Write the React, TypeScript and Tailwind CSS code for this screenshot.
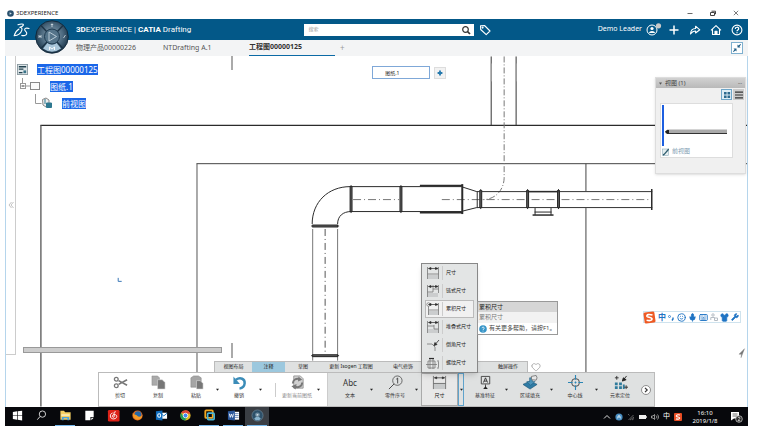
import type { ReactNode } from 'react'
import clsx from 'clsx'
import { Wrench, Keyboard, Mic, Smile, Shirt, Heart } from 'lucide-react'

const DARK = '#2b2b2b'

function Compass() {
  return (
    <svg viewBox="0 0 34 34" className="absolute left-[30px] top-[13px] z-10 size-[34px]">
      <defs>
        <radialGradient id="ring" cx="50%" cy="45%" r="60%">
          <stop offset="0%" stopColor="#8fa3b1" />
          <stop offset="55%" stopColor="#4d6a80" />
          <stop offset="100%" stopColor="#10283b" />
        </radialGradient>
      </defs>
      <circle cx="17" cy="17" r="16.3" fill="url(#ring)" stroke="#0b2233" strokeWidth=".8" />
      <path d="M6 5.500 12 12M28 5.500 22 12M6 28.500 12 22M28 28.500 22 22" stroke="#1c3447" strokeWidth="1.400" />
      <path d="M12.500 23 Q17 26 21.500 23 L26 28.500 Q17 35 8 28.500Z" fill="#a9c6da" />
      <circle cx="17" cy="16.500" r="7.500" fill="#55748a" stroke="#1d3a50" strokeWidth="1" />
      <path d="M14 12 21.500 16.500 14 21Z" fill="none" stroke="#c3d4df" strokeWidth=".9" />
      <path d="M17 3.500v3.500M15.800 4.500h2.400M4 15v3M6 15v3M4 16.500h2M28.500 18l2-3" stroke="#d5dfe6" strokeWidth=".8" fill="none" />
      <path d="M14.500 30v-3l2.500 2 2.500-2v3" stroke="#fff" strokeWidth=".9" fill="none" />
    </svg>
  )
}

function DsLogo() {
  return (
    <svg viewBox="0 0 18 14" className="h-[14px] w-[18px]" fill="none" stroke="#fff" strokeWidth="1.100" strokeLinecap="round" strokeLinejoin="round">
      <path d="M5 1.800C7.500 .8 11 .6 10.300 2.200 9.800 3.300 8 4 6.800 4.300 8.600 4.300 9.400 5.500 8.800 7.300 7.800 10.300 5 12.400 1.200 12.700 2 10 3.800 7.300 6 6" />
      <path d="M16 5.500C13.500 4.700 11.500 5.300 11.700 6.800 12 8.300 14.300 8.800 13.700 10.800 13.200 12.600 10.500 13 8.800 12.400" />
    </svg>
  )
}

function TitleBar() {
  return (
    <div className="flex h-[12px] items-center justify-between pl-[2px] pr-[9px]">
      <div className="flex items-center gap-[2px] text-[6px] text-[#222]">
        <svg viewBox="0 0 8 8" className="size-[7px]">
          <circle cx="4" cy="4" r="3.800" fill="#2b516e" />
          <path d="M3 2.500 5.500 4 3 5.500Z" fill="#cfe0ea" />
        </svg>
        <span>3DEXPERIENCE</span>
      </div>
      <div className="flex items-center gap-[17px] text-[#444]">
        <button aria-label="最小化"><svg viewBox="0 0 6 6" className="size-[6px]"><path d="M.5 3.500h5" stroke="currentColor" strokeWidth=".8" /></svg></button>
        <button aria-label="还原"><svg viewBox="0 0 6 6" className="size-[6px]" fill="none" stroke="currentColor"><path d="M.5 2.500h4v3h-4zM1.500 1.200h4v3" /></svg></button>
        <button aria-label="关闭"><svg viewBox="0 0 6 6" className="size-[6px]"><path d="M.8.8l4.400 4.400M5.200.8.8 5.200" stroke="currentColor" strokeWidth=".7" /></svg></button>
      </div>
    </div>
  )
}

function HeaderButton({ label, children }: { label: string; children: ReactNode }) {
  return (
    <button aria-label={label} className="flex size-[12px] items-center justify-center text-white">
      <svg viewBox="0 0 12 12" className="size-[12px]" fill="none" stroke="currentColor" strokeWidth="1.1" strokeLinejoin="round">
        {children}
      </svg>
    </button>
  )
}

function Header() {
  return (
    <header className="flex h-[21px] items-center bg-[#035888] pl-[8px] pr-[5px] text-white">
      <DsLogo />
      <h1 className="ml-[45px] w-[31.3%] whitespace-nowrap font-['Roboto'] text-[8px]">
        <b>3D</b>EXPERIENCE | <b>CATIA</b> Drafting
      </h1>
      <div className="flex h-[12px] w-[170px] items-center bg-white pl-[4px] pr-[3px]">
        <input aria-label="搜索" placeholder="搜索" className="min-w-0 flex-1 text-[5px] text-[#333] outline-none placeholder:text-[#999]" />
        <button aria-label="搜索">
          <svg viewBox="0 0 10 10" className="size-[10px]" fill="none" stroke="#333">
            <circle cx="4.500" cy="4.500" r="2.800" strokeWidth="1.200" />
            <path d="M6.600 6.600 9 9" strokeWidth="1.700" />
          </svg>
        </button>
      </div>
      <div className="ml-[5px]">
        <HeaderButton label="标记">
          <path d="M1.500 1.800 5.500 1.500 11 7 7.200 10.600 1.700 5.500Z" />
          <circle cx="3.600" cy="3.600" r=".5" />
        </HeaderButton>
      </div>
      <span className="ml-auto mr-[4px] text-[7px]">Demo Leader</span>
      <div className="flex items-center gap-[9px]">
        <button aria-label="用户" className="flex size-[13px] text-white">
          <svg viewBox="0 0 16 13" className="h-[13px] w-[16px] shrink-0">
            <circle cx="6" cy="7" r="5" fill="none" stroke="#fff" />
            <circle cx="6" cy="5.500" r="1.600" fill="#fff" />
            <path d="M3 10C3 7.200 9 7.200 9 10Z" fill="#fff" />
            <circle cx="12.500" cy="2.800" r="2.600" fill="#c9c9c9" />
          </svg>
        </button>
        <HeaderButton label="添加"><path d="M6 1.500v9M1.500 6h9" strokeWidth="1.500" /></HeaderButton>
        <HeaderButton label="共享"><path d="M1.500 10C1.700 6.500 3.500 4.600 6.600 4.500V2.200L10.800 5.800 6.600 9V7C4.500 7 3 7.800 1.500 10Z" /></HeaderButton>
        <HeaderButton label="主页"><path d="M1 6.300 6 1.600 11 6.300M2.500 5.500v5h7v-5" /><path d="M5 10.500V7.200h2v3.300Z" fill="currentColor" /></HeaderButton>
        <HeaderButton label="帮助"><circle cx="6" cy="6" r="4.900" /><path d="M4.300 4.900C4.300 2.700 7.700 2.700 7.700 4.700 7.700 6 6 5.900 6 7.200M6 8.200v1.100" strokeWidth="1.200" /></HeaderButton>
      </div>
    </header>
  )
}

function DocTabs() {
  return (
    <nav className="flex h-[16px] items-center bg-[#f3f4f5] pl-[71px] pr-[5px] text-[7px] text-[#555]">
      <button className="w-[87px] text-left">物理产品00000226</button>
      <button className="w-[86px] text-left">NTDrafting A.1</button>
      <button className="h-full w-[86px] border-b border-[#0b6aa5] text-left font-bold text-[#333]">工程图00000125</button>
      <button aria-label="新建" className="ml-[5px] text-[8px] text-[#999]">+</button>
      <button aria-label="退出全屏" className="ml-auto flex size-[12px] items-center justify-center border border-[#7fb0cf] bg-white">
        <svg viewBox="0 0 10 10" className="size-[10px]" fill="#1f5f87">
          <path d="M5.500 1.500 6.500 2.500 8.500 1 9 1.500 7.500 3.500 8.500 4.500H5.500ZM4.500 8.500 3.500 7.500 1.500 9 1 8.500 2.500 6.500 1.500 5.500H4.500Z" />
        </svg>
      </button>
    </nav>
  )
}

function Flange({ x, y, length, vertical = true }: { x: number; y: number; length: number; vertical?: boolean }) {
  return vertical ? (
    <g stroke={DARK}>
      <path d={`M${x} ${y}v${length}`} strokeWidth="1" />
      <path d={`M${x} ${y + 1}v${length - 2}`} strokeWidth="3" />
      <path d={`M${x} ${y + 2}v${length - 4}`} stroke="#777" strokeWidth=".6" />
    </g>
  ) : (
    <g stroke={DARK}>
      <path d={`M${x} ${y}h${length}`} strokeWidth="1" />
      <path d={`M${x + 1} ${y}h${length - 2}`} strokeWidth="3" />
      <path d={`M${x + 2} ${y}h${length - 4}`} stroke="#777" strokeWidth=".6" />
    </g>
  )
}

function Drawing() {
  return (
    <svg viewBox="5 56 743 351" className="absolute inset-0 size-full" fill="none" stroke={DARK} strokeWidth="1">
      <path d="M39.500 125H748" strokeWidth="1.300" />
      <path d="M40 125V407" stroke="#555" strokeWidth="1.300" />
      <path d="M196 163.500H748" stroke="#444" />
      <path d="M196.500 163.500V373" stroke="#555" />
      <path d="M586.500 163.500V191M586.500 208V373" stroke="#444" />
      <path d="M491.500 56V125M516.500 56V125" stroke="#333" />
      <path d="M491.500 63V81M516.500 63V81" stroke="#aaa" />
      <path d="M504.500 56V178C504 190 496 199 484 199.500" stroke="#777" strokeDasharray="6 2 1 2" />

      <path d="M312 224C312 202 328 186.500 350 186.500H462" />
      <path d="M337.500 224C337.500 216 343 211.500 351 211.500H462" />
      <path d="M312.500 229V361M337.500 229V361" stroke="#777" />
      <path d="M325 229V355" stroke="#555" strokeDasharray="7 3 1 3" />
      <path d="M353 199.500H399M442 199.500H652" stroke="#777" strokeDasharray="8 3 1 3" />
      <Flange x={311} y={226} length={28} vertical={false} />
      <Flange x={311} y={356} length={28} vertical={false} />
      <Flange x={351} y={185} length={28} />
      <Flange x={401} y={185} length={28} />
      <path d="M420 185.500H463M420 212.500H463" strokeWidth="2" />
      <path d="M462.500 184V214" strokeWidth="2" />
      <path d="M463 187 477 191.500M463 211 477 207.500M477.500 191V208" />
      <path d="M477 191.500H653M477 207.500H653" stroke="#333" />
      <Flange x={481} y={189} length={20} />
      <Flange x={528} y={189} length={20} />
      <Flange x={559} y={189} length={20} />
      <path d="M528 191.500H559" strokeWidth="1.500" />
      <path d="M652.500 189V210" strokeWidth="1.500" />
      <path d="M535.500 208V215M551.500 208V215M535 212H552" />
      <path d="M533 215H554" strokeWidth="1.500" />

      <path d="M117.500 278V281.500H121" stroke="#3b78b8" />
      <path d="M745.500 349 740 354.500 742.500 354.500 742 358Z" fill="#777" stroke="#777" strokeWidth=".4" />
    </svg>
  )
}

function Tree() {
  return (
    <ul className="relative pl-px pt-[5px] text-[8px] text-white">
      <li className="flex h-[17px] items-center gap-[9px]">
        <svg viewBox="0 0 12 12" className="size-[11px]">
          <rect x=".5" y=".5" width="11" height="11" fill="#dde5e8" stroke="#8b9aa1" />
          <path d="M2 3h8M2 5.500h5M2 9.500h4" stroke="#23424f" strokeWidth="1.400" />
          <path d="M7 7h3v3H7z" fill="#3b7489" />
        </svg>
        <span className="bg-[#1a66e8] leading-[11px]">工程图00000125</span>
      </li>
      <li className="flex h-[16px] items-center pl-[3px]">
        <svg viewBox="0 0 22 16" className="h-[16px] w-[22px]" fill="none" stroke="#999">
          <path d="M2.500 0v5M5 8h5" />
          <rect x=".5" y="5.500" width="5" height="5" fill="#fff" />
          <path d="M1.500 8h3" stroke="#333" />
          <rect x="10.500" y="4.500" width="9" height="7" fill="#fafafa" stroke="#888" />
        </svg>
        <span className="ml-[8px] bg-[#1a66e8] leading-[11px]">图纸.1</span>
      </li>
      <li className="flex h-[18px] items-center pl-[17px]">
        <svg viewBox="0 0 20 18" className="h-[18px] w-[20px]" fill="none" stroke="#999">
          <path d="M1.500 0v9.500h6" />
          <path d="M8.500 5.500 12 4l3 2v4l-3 3-3-2z" fill="#eee" stroke="#888" />
          <path d="M11 5v5M12.500 9h5v4.500h-5z" fill="#2e7890" stroke="#2e7890" />
        </svg>
        <span className="ml-[8px] bg-[#1a66e8] leading-[11px]">前视图</span>
      </li>
    </ul>
  )
}

function ViewsPanel() {
  return (
    <aside className="relative mr-px mt-[21px] h-[97px] w-[91px] border border-[#ddd] bg-[#f0f0f0] text-[6px] text-[#444] shadow-sm">
      <div className="flex h-[10px] items-center bg-gradient-to-b from-[#d2d2d2] to-[#b9b9b9] px-[3px]">
        <svg viewBox="0 0 4 4" className="mr-[3px] size-[3px]"><path d="M0 .5h4L2 3.500Z" fill="#555" /></svg>
        <span>视图 (1)</span>
        <span className="ml-auto text-[5px]">...</span>
      </div>
      <div className="flex justify-end gap-px pr-px pt-px">
        <button aria-label="图标视图" className="flex size-[11px] items-center justify-center border border-[#6fa6c8] bg-[#deedf5]">
          <svg viewBox="0 0 8 8" className="size-[8px]" fill="#2c6a8e"><path d="M1 1h2.600v2.600H1zM4.500 1h2.600v2.600H4.500zM1 4.500h2.600v2.600H1zM4.500 4.500h2.600v2.600H4.500z" /></svg>
        </button>
        <button aria-label="列表视图" className="flex size-[11px] items-center justify-center bg-[#ccc]">
          <svg viewBox="0 0 8 8" className="size-[8px]" stroke="#333" strokeWidth="1.200"><path d="M0 1.200h8M0 4h8M0 6.800h8" /></svg>
        </button>
      </div>
      <div className="ml-[4px] mt-[3px] w-[73px] border border-[#ddd] bg-white pl-px pt-px">
        <div className="flex h-[41px] items-center border-l-2 border-[#1d5fe0]">
          <svg viewBox="0 0 66 6" className="mt-[12px] h-[6px] w-[66px]">
            <path d="M3 .5H63V4.500H3Z" fill="#aaa" />
            <path d="M3 4.500H63" stroke="#333" strokeWidth="1" />
            <path d="M1 2.500 3 1h2v3.500H2Z" fill="#222" />
          </svg>
        </div>
        <div className="flex h-[11px] items-center gap-[3px] text-[#7f9db3]">
          <svg viewBox="0 0 7 8" className="h-[8px] w-[7px]">
            <rect x=".5" y="1" width="6" height="6.500" fill="#e6eef0" stroke="#8eb0bd" strokeWidth=".6" />
            <path d="M1 7C3 6.500 4 4 6.800 1" fill="none" stroke="#2f5d6e" strokeWidth="1.300" />
          </svg>
          <span>前视图</span>
        </div>
      </div>
    </aside>
  )
}

function ImeBar() {
  return (
    <div className="absolute right-[6px] top-[255px] flex h-[12px] items-center gap-[2px] border border-[#cfe3ee] bg-white pr-px text-[#1f74c4]">
      <svg viewBox="0 0 13 13" className="-ml-px size-[13px]">
        <rect x="1" y="1" width="11" height="11" rx="1.500" fill="#ee5a24" transform="rotate(-8 6.500 6.500)" />
        <path d="M9.500 4C6 3 3.500 3.500 4 5.300 4.500 6.500 9 6 9 8 9 9.800 6 9.800 3.600 9.200" fill="none" stroke="#fff" strokeWidth="1.700" />
      </svg>
      <b className="text-[8px] leading-none">中</b>
      <svg viewBox="0 0 7 7" className="size-[7px]"><circle cx="1.500" cy="2.500" r="1" fill="none" stroke="currentColor" strokeWidth=".8" /><path d="M5 3.500v1.500L4 6.500" stroke="currentColor" strokeWidth="1.400" fill="none" /></svg>
      <Smile className="size-[9px]" strokeWidth={2.5} />
      <Mic className="size-[9px]" fill="currentColor" />
      <Keyboard className="size-[9px]" strokeWidth={2.5} />
      <svg viewBox="0 0 8 8" className="size-[8px]" fill="none" stroke="#b5bcc4"><circle cx="3" cy="2" r="1.200" /><path d="M.8 7V4.500h4M4.500 5h3v2.500h-3z" /></svg>
      <Shirt className="size-[9px]" fill="currentColor" />
      <Wrench className="size-[8px]" fill="currentColor" />
    </div>
  )
}

const menuItems: { name: string; icon: ReactNode }[] = [
  { name: '尺寸', icon: <path d="M1.500 1v12M12.500 1v12M1.500 8h11" /> },
  { name: '链式尺寸', icon: <path d="M1.500 1v12M7 1v7M12.500 1v8M1.500 8H7M7 5h5.500" /> },
  { name: '累积尺寸', icon: <><path d="M2.500 4v9M12.500 1v12M2.500 8h10" /><circle cx="2.500" cy="2.500" r="1.700" fill="#fff" /></> },
  { name: '堆叠式尺寸', icon: <path d="M1.500 1v12M12.500 1v12M8 5v4h4.500M1.500 6H8" /> },
  { name: '倒角尺寸', icon: <><path d="M1 6h5l3 3v4" /><path d="M8 7.500 9 4.500 11 6.500ZM10 5.500l3-3.500" fill={DARK} stroke={DARK} /></> },
  { name: '螺纹尺寸', icon: <><path d="M2 5h7v7H2zM4 2v11M7 2v11M0 8.500h11M12.500 5.500v6M11 5h2M11 12h2" /><path d="M3 2.500h5" stroke={DARK} strokeWidth="1.200" /></> },
]

function DimensionMenu() {
  return (
    <div className="absolute bottom-full left-0 z-20 w-[57px] border border-[#888] bg-[#e3e5e5] shadow-md">
      <ul className="flex h-[108px] flex-col px-[3px]">
        {menuItems.map((item, i) => (
          <li key={item.name} className="relative flex flex-1">
            <button className={clsx('flex flex-1 items-center whitespace-nowrap border text-[5px] text-[#222]', i === 2 ? 'border-[#bbb] bg-[#f1f1f1]' : 'border-transparent')}>
              <svg viewBox="0 0 14 14" className="mr-[2px] size-[14px] shrink-0" fill="none" stroke="#777" strokeWidth=".8">
                {i < 4 && <path d="M2 9h10v4H2z" fill="#cbcdce" stroke="none" />}
                {item.icon}
                {i < 4 && <path d="M4 2.500h7M5 1.500v2L2.500 2.500ZM9.500 1.500v2l2.500-1Z" fill={DARK} stroke={DARK} strokeWidth=".7" />}
              </svg>
              <span className="border-l border-[#ccc] py-[3px] pl-[3px]">{item.name}</span>
            </button>
            {i === 2 && <Tooltip />}
          </li>
        ))}
      </ul>
    </div>
  )
}

function Tooltip() {
  return (
    <div role="tooltip" className="absolute left-[52px] top-px w-[81px] border border-[#999] bg-white text-left text-[6px] leading-[11px] text-[#444]">
      <p className="h-[10px] bg-[#d6d6d6] pl-px leading-[10px] text-[#222]">累积尺寸</p>
      <p className="bg-[#f2f2f2] pl-px text-[#777]">累积尺寸</p>
      <p className="flex items-center gap-[2px] whitespace-nowrap pl-px">
        <svg viewBox="0 0 8 8" className="size-[8px] shrink-0">
          <circle cx="4" cy="4" r="3.800" fill="#3795c8" />
          <path d="M3 3.200C3 1.700 5.200 1.700 5.200 3.200 5.200 4.200 4 4 4 5M4 5.700v.8" fill="none" stroke="#fff" strokeWidth=".8" />
        </svg>
        有关更多帮助，请按F1。
      </p>
    </div>
  )
}

function Tool({ label, muted, children }: { label: string; muted?: boolean; children: ReactNode }) {
  return (
    <button className={clsx('flex w-[38px] flex-col items-center gap-px whitespace-nowrap pt-[2px] text-[5px] leading-[8px]', muted ? 'text-[#888]' : 'text-[#333]')}>
      <svg viewBox="0 0 16 16" className="size-[15px]" fill="none">{children}</svg>
      {label}
    </button>
  )
}

function Caret() {
  return (
    <button aria-label="更多" className="flex w-[5px] items-center justify-center">
      <svg viewBox="0 0 4 4" className="size-[3px]"><path d="M0 1h4L2 3.500Z" fill="#222" /></svg>
    </button>
  )
}

function ActionBar() {
  return (
    <div className="relative mx-auto w-fit">
      <div className="flex h-[11px] items-end pl-[116px] text-[5px] text-[#222]">
        <div className="flex h-full border border-b-0 border-[#bbb] bg-[#dfe1e1]">
          <button className="w-[37px]">视图布局</button>
          <button className="w-[33px] bg-[#9cc8de]">注释</button>
          <button className="w-[36px]">草图</button>
          <button className="w-[60px]">更新 Isogen 工程图</button>
          <button className="w-[44px]">电气修饰</button>
          <div className="w-[64px]" />
          <button className="w-[38px] whitespace-nowrap">触屏操作</button>
        </div>
        <button aria-label="收藏" className="ml-[3px] self-center"><Heart className="size-[10px] text-[#888]" strokeWidth={1.5} /></button>
      </div>
      <div className="flex h-[35px] border border-[#bbb] bg-[#dfe1e1]">
        <div className="flex bg-white pl-[2px] pr-[6px]">
          <Tool label="剪切">
            <path d="M6 6 15 11M6 10 15 5" stroke="#777" strokeWidth="1.800" />
            <circle cx="3.500" cy="4.500" r="2" stroke="#777" strokeWidth="1.400" />
            <circle cx="3.500" cy="11.500" r="2" stroke="#777" strokeWidth="1.400" />
          </Tool>
          <Tool label="复制">
            <path d="M1 1h6l2 2v8H1z" fill="#aaa" stroke="#888" strokeWidth=".5" />
            <path d="M7 5h5l3 3v7H7z" fill="#777" stroke="#ddd" strokeWidth=".6" />
          </Tool>
          <Tool label="粘贴">
            <path d="M2 3 5 1h5l3 2v10H2z" fill="#a5a5a5" stroke="#888" strokeWidth=".6" />
            <path d="M8 6h4l3 3v6H8z" fill="#777" stroke="#ddd" strokeWidth=".6" />
          </Tool>
          <Caret />
          <Tool label="撤销">
            <path d="M4 5C9 2 14 4 13.500 9 13.200 12 11 14 8 14.500" stroke="#3b8cb8" strokeWidth="2.600" />
            <path d="M1.500 1.500V9.500H8.500Z" fill="#3b8cb8" />
          </Tool>
          <Caret />
          <div className="ml-[12px] mr-[2px] h-[14px] w-px self-center bg-[#ccc]" />
          <Tool label="更新当前图纸" muted>
            <path d="M4 1h7l3 3v10H4z" fill="#d0d0d0" stroke="#999" />
            <path d="M3 9A5 5 0 0 1 10 4.500M13 8A5 5 0 0 1 5 12" stroke="#777" strokeWidth="2" />
            <path d="M9 1.500 13 5 8.500 7ZM7 9.500 1.500 12 6 15.500Z" fill="#777" />
          </Tool>
          <Caret />
        </div>
        <div className="flex gap-[2px] border-l border-[#ccc] pl-[3px] pr-[3px]">
          <div className="flex">
            <button className="flex w-[38px] flex-col items-center gap-px pt-[2px] text-[5px] leading-[8px] text-[#333]">
              <span className="text-[8px] leading-[15px]">Abc</span>
              文本
            </button>
            <Caret />
          </div>
          <div className="flex">
            <Tool label="零件序号">
              <circle cx="10" cy="6" r="5" stroke="#444" strokeWidth=".8" />
              <path d="M1 15 6.500 9.500M8.800 4.500 10.300 3.200V9" stroke="#444" />
            </Tool>
            <Caret />
          </div>
          <div className="relative flex w-[43px]">
            <button className="flex w-[37px] flex-col items-center gap-px border border-[#aaa] bg-[#e8e8e8] pt-px text-[5px] leading-[8px] text-[#222]">
              <svg viewBox="0 0 16 16" className="size-[15px]" fill="none" stroke="#333">
                <path d="M2 9h12v6H2z" fill="#c7c9ca" stroke="none" />
                <path d="M1.500 1v14M14.500 1v14M1.500 9h13" stroke="#666" strokeWidth=".9" />
                <path d="M4 3h8M5 2v2L2.500 3ZM11 2v2l2.500-1Z" fill="#222" strokeWidth=".8" />
              </svg>
              尺寸
            </button>
            <button aria-label="尺寸选项" aria-expanded="true" className="flex w-[6px] items-center justify-center border border-[#5fa3cc]">
              <svg viewBox="0 0 4 4" className="size-[3px] shrink-0"><path d="M0 1h4L2 3.500Z" fill="#222" /></svg>
            </button>
            <DimensionMenu />
          </div>
          <div className="flex">
            <Tool label="基准特征">
              <path d="M3.500 1.500h9v8h-9zM8 10v4" stroke="#444" />
              <path d="M5.800 8 8 3 10.200 8M6.500 6.500h3" stroke="#333" />
              <path d="M5.500 15 8 12l2.500 3Z" fill="#222" />
            </Tool>
            <Caret />
          </div>
          <div className="flex">
            <Tool label="区域填充">
              <path d="M0 10 7.500 6.500 15 10 7.500 15Z" fill="#2f7ba5" stroke="#1e5877" strokeWidth=".7" />
              <path d="M4 7h3V3h3v4h3l-5 4Z" fill="#4a93b9" stroke="#1e5877" strokeWidth=".5" />
              <path d="M9 1.500 14 .5q2 2.500 0 5l-5-.5Z" fill="#e6e6e6" stroke="#666" strokeWidth=".8" />
            </Tool>
            <Caret />
          </div>
          <div className="flex">
            <Tool label="中心线">
              <circle cx="8" cy="8" r="4.200" stroke="#444" />
              <path d="M8 0v5M8 11v5M0 8h5M11 8h5M7 8h2M8 7v2" stroke="#2b86b5" strokeWidth="1.200" />
            </Tool>
            <Caret />
          </div>
          <Tool label="元素定位">
            <path d="M2 8h3v3H2zM2 12h3v3H2zM6.500 12h3v3h-3zM6.500 8h3v3h-3zM10.500 10h2v5h-2z" fill="#2f7b9c" />
            <path d="M2 3h4M4 1v4M12 13h4M14 11v4" stroke="#333" />
            <path d="M10 6.500 11 3l3 2ZM12 4l2.500-3" fill="#222" stroke="#222" />
          </Tool>
          <button aria-label="下一页" className="self-center">
            <svg viewBox="0 0 10 10" className="size-[10px]" fill="none" stroke="#333">
              <circle cx="5" cy="5" r="4.500" fill="#fff" stroke="#777" strokeWidth=".8" />
              <path d="M4 2.800 6.200 5 4 7.200" strokeWidth="1.200" />
            </svg>
          </button>
        </div>
      </div>
    </div>
  )
}

const apps: { name: string; open?: boolean; active?: boolean; icon: ReactNode }[] = [
  { name: '开始', icon: <path d="M2 3.200 6.500 2.500V6.700H2ZM7.200 2.400 12 1.800V6.700H7.200ZM2 7.400H6.500V11.500L2 10.800ZM7.200 7.400H12V12.300L7.200 11.600Z" fill="#fff" /> },
  { name: '搜索', icon: <><circle cx="8" cy="5.500" r="3.400" fill="none" stroke="#ddd" /><path d="M5.500 8 2.500 11.500" stroke="#ddd" /></> },
  { name: '文件资源管理器', open: true, icon: <><path d="M1.500 2h4l1 1.500h6v8h-11z" fill="#f5cf62" /><path d="M2.500 5.500h9v2h-9z" fill="#fbe9ae" /><path d="M3 12V8.500h8V12H9V10H5v2Z" fill="#4aa3df" /></> },
  { name: '便笺', icon: <path d="M2.500 2h9v6.500H8V12H2.500ZM9 9.500h2.500L9 12Z" fill="#fff" /> },
  { name: '音乐', icon: <><rect x="1" y="1" width="12.500" height="12.500" rx="1.500" fill="#dd2218" /><path d="M9.500 3C7 2.500 7.500 5 7.800 7.500 8 9.500 5.500 9.200 5.800 7.500 6.200 5.200 10.500 5.500 10.500 8 10.500 11.500 3.500 11.800 3.600 7.500 3.600 5.500 5 4.500 6 4.300" stroke="#fff" strokeWidth="1" fill="none" /></> },
  { name: 'Firefox', icon: <><circle cx="7" cy="7" r="5.500" fill="#e66b1f" /><circle cx="7.500" cy="6" r="3.700" fill="#2467a8" /><path d="M1.800 4C3 7 5 5 7 7.500 8 9 11 8.500 12.200 6.500 12 13 2 14 1.800 4Z" fill="#f39a26" /></> },
  { name: 'Outlook', icon: <><path d="M6 4h7v6.500H6z" fill="#fff" /><path d="M6 4.500 9.500 7.500 13 4.500" stroke="#1470bd" fill="none" /><path d="M1 2.500 8 1.500V12.500L1 11.500Z" fill="#0f6cbd" /><ellipse cx="4.500" cy="7" rx="1.600" ry="2" fill="none" stroke="#fff" strokeWidth="1.100" /></> },
  { name: 'Chrome', icon: <><circle cx="7" cy="7" r="5.500" fill="#e2b928" /><path d="M2.200 4.300A5.500 5.500 0 0 1 12.200 5H7Z" fill="#dc4437" /><path d="M2.200 4.300A5.500 5.500 0 0 0 6.500 12.500L9 8.500 5 8Z" fill="#1f9d57" /><circle cx="7" cy="7" r="2.500" fill="#4285f4" stroke="#fff" strokeWidth=".8" /></> },
  { name: '虚拟机', open: true, icon: <><rect x="2.500" y="1.500" width="8" height="8" rx="1" fill="none" stroke="#f0a51e" strokeWidth="2" /><rect x="5" y="4.500" width="7" height="7" rx="1" fill="none" stroke="#4bb6d6" strokeWidth="1.800" /></> },
  { name: 'Word', open: true, icon: <><path d="M6 3h7v8.500H6z" fill="#fff" /><path d="M8.500 5h4M8.500 7h4M8.500 9h4" stroke="#2b5797" strokeWidth=".7" /><path d="M1 2.500 8.500 1.500V12.500L1 11.500Z" fill="#2b579a" /><path d="M2.500 5 3.500 9 4.700 5.500 6 9 7 5" stroke="#fff" fill="none" strokeWidth=".9" /></> },
  { name: '3DEXPERIENCE', open: true, active: true, icon: <><circle cx="7" cy="7" r="6" fill="#2d5069" stroke="#7d96a8" strokeWidth=".6" /><path d="M3.500 10 5.500 8.500h3L10.500 10 9 12H5Z" fill="#89b4ce" /><circle cx="7" cy="6.300" r="2.600" fill="#6f8da1" /><path d="M6.200 5 8.400 6.300 6.200 7.600Z" fill="#dfe9ef" /></> },
]

function Taskbar() {
  return (
    <footer className="flex h-[19px] items-stretch bg-[#07080c] text-white">
      {apps.map(app => (
        <button key={app.name} aria-label={app.name} className={clsx('flex w-[24px] flex-col items-center', app.active && 'bg-[#3a3e44]')}>
          <svg viewBox="0 0 14 14" className="mt-[2px] size-[13px]">{app.icon}</svg>
          {app.open && <span className="mt-auto h-px w-[20px] bg-[#76b9ed]" />}
        </button>
      ))}
      <div className="ml-auto flex items-center gap-[4px] pr-[5px]">
        <svg viewBox="0 0 8 8" className="size-[8px]" fill="none" stroke="#ddd"><path d="M1 5.500 4 2.500 7 5.500" /></svg>
        <svg viewBox="0 0 8 8" className="size-[8px]"><circle cx="4" cy="4" r="3.600" fill="#4a90c4" /><path d="M2.500 5.500 4 2l1.500 3.500M2 4h4" stroke="#dbeaf4" strokeWidth=".7" fill="none" /></svg>
        <svg viewBox="0 0 8 8" className="size-[8px]" fill="none" stroke="#888"><path d="M1 1l1.500 1.500M1.500 7 6.500 2M3 7l4-3M5 7l2-1.500" strokeWidth=".7" /></svg>
        <svg viewBox="0 0 8 8" className="size-[8px]"><path d="M0 2h7v4H0zM7.300 3h.7v2h-.7z" fill="#eee" /></svg>
        <svg viewBox="0 0 8 8" className="size-[8px]" fill="none" stroke="#ccc" strokeWidth=".7"><path d="M.5 3H2L3.500 1.500v5L2 5H.5ZM5 2.500c1 1 1 2 0 3M6.500 1.500c1.300 1.500 1.300 3.500 0 5" /></svg>
        <span className="text-[7px]">中</span>
        <svg viewBox="0 0 8 8" className="size-[8px]"><rect width="8" height="8" rx="1" fill="#e84c22" /><path d="M6 2C3.500 1.500 2 2 2.300 3.200 2.700 4.200 5.800 3.700 5.700 5 5.600 6.400 3.500 6.300 2 5.900" fill="none" stroke="#fff" strokeWidth="1.100" /></svg>
        <div className="ml-[3px] w-[32px] text-center text-[6px] leading-[8px]">
          <p>16:10</p>
          <p>2019/1/8</p>
        </div>
        <svg viewBox="0 0 13 12" className="ml-[5px] h-[12px] w-[13px]">
          <path d="M1 1h8v6.500H4L1 9.500Z" fill="#fff" />
          <path d="M2.500 3h5M2.500 5h5" stroke="#333" strokeWidth=".7" />
          <circle cx="9" cy="8" r="3.300" fill="#222" stroke="#ddd" strokeWidth=".7" />
          <path d="M8 7.200C8 5.700 10 5.900 10 7.200L8 9.700H10.200" fill="none" stroke="#fff" strokeWidth=".7" />
        </svg>
      </div>
    </footer>
  )
}

export default function App() {
  return (
    <div className="flex h-screen flex-col bg-white pb-[3px] pl-[5px] pr-[9px] pt-[7px] font-['Noto_Sans','Noto_Sans_CJK_SC',sans-serif]">
      <TitleBar />
      <div className="relative">
        <div className="absolute left-0 -top-[12px]">
          <div className="relative"><Compass /></div>
        </div>
        <Header />
        <DocTabs />
      </div>
      <main className="relative flex flex-1 flex-col border-x border-x-[#b5d5ec]">
        <Drawing />
        <div className="relative flex flex-1">
          <div className="mb-[6px] flex w-[10px] items-center justify-center border-b border-r border-[#ccc] bg-white">
            <button aria-label="展开"><svg viewBox="0 0 6 8" className="h-[8px] w-[6px]" fill="none" stroke="#aaa"><path d="M3.500 1 1 4l2.500 3M5.500 1 3 4l2.500 3" strokeWidth=".7" /></svg></button>
          </div>
          <div className="flex w-[206px] flex-col justify-between pb-[8px]">
            <Tree />
            <div className="ml-[7px] h-[6px] border border-[#999] bg-[#ccc]" />
          </div>
          <div className="ml-[9px] flex w-[2px] flex-col justify-between pb-[3px]">
            <div className="h-[14px] bg-[#aaa]" />
            <div className="h-[15px] bg-[#aaa]" />
          </div>
          <div className="flex-1">
            <div className="ml-[33%] mt-[10px] flex items-center gap-[4px]">
              <input aria-label="图纸" defaultValue="图纸.1" className="h-[13px] w-[58px] border border-[#7fa8d8] bg-white px-[12px] text-[5px] text-[#222] outline-none" />
              <button aria-label="添加图纸" className="flex size-[12px] items-center justify-center border border-[#ddd] bg-[#f2f2f2]">
                <svg viewBox="0 0 8 8" className="size-[6px]"><path d="M4 .8v6.400M.8 4h6.400" stroke="#2579ad" strokeWidth="2.400" /></svg>
              </button>
            </div>
          </div>
          <ViewsPanel />
          <ImeBar />
        </div>
        <ActionBar />
      </main>
      <Taskbar />
    </div>
  )
}
